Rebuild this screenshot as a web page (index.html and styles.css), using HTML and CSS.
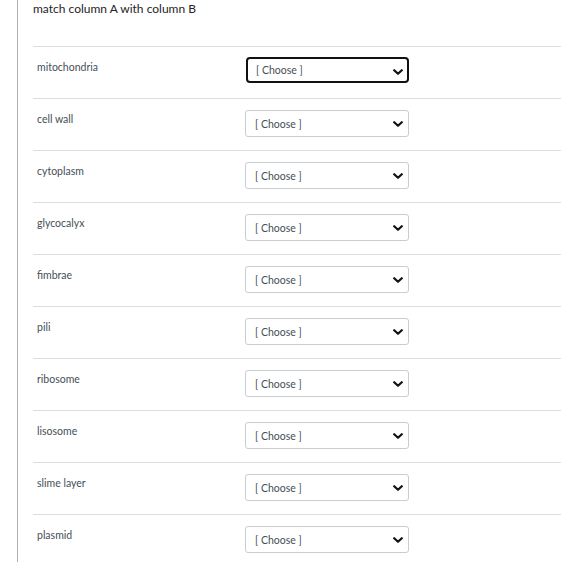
FILE: index.html
```html
<!DOCTYPE html>
<html>
<head>
<meta charset="utf-8">
<link rel="stylesheet" href="styles.css">
</head>
<body>
<div class="page">
  <div class="question">
    <div class="title">match column A with column B</div>
    <div class="rows">
      <div class="row"><div class="label">mitochondria</div><div class="sel focus"><select><option>[ Choose ]</option></select><svg class="chev" viewBox="0 0 10 6" width="10" height="6"><path d="M1.2 1.2 L5 4.8 L8.8 1.2" fill="none" stroke="#111" stroke-width="2.2" stroke-linecap="round" stroke-linejoin="round"/></svg></div></div>
      <div class="row"><div class="label">cell wall</div><div class="sel"><select><option>[ Choose ]</option></select><svg class="chev" viewBox="0 0 10 6" width="10" height="6"><path d="M1.2 1.2 L5 4.8 L8.8 1.2" fill="none" stroke="#111" stroke-width="2.2" stroke-linecap="round" stroke-linejoin="round"/></svg></div></div>
      <div class="row"><div class="label">cytoplasm</div><div class="sel"><select><option>[ Choose ]</option></select><svg class="chev" viewBox="0 0 10 6" width="10" height="6"><path d="M1.2 1.2 L5 4.8 L8.8 1.2" fill="none" stroke="#111" stroke-width="2.2" stroke-linecap="round" stroke-linejoin="round"/></svg></div></div>
      <div class="row"><div class="label">glycocalyx</div><div class="sel"><select><option>[ Choose ]</option></select><svg class="chev" viewBox="0 0 10 6" width="10" height="6"><path d="M1.2 1.2 L5 4.8 L8.8 1.2" fill="none" stroke="#111" stroke-width="2.2" stroke-linecap="round" stroke-linejoin="round"/></svg></div></div>
      <div class="row"><div class="label">fimbrae</div><div class="sel"><select><option>[ Choose ]</option></select><svg class="chev" viewBox="0 0 10 6" width="10" height="6"><path d="M1.2 1.2 L5 4.8 L8.8 1.2" fill="none" stroke="#111" stroke-width="2.2" stroke-linecap="round" stroke-linejoin="round"/></svg></div></div>
      <div class="row"><div class="label">pili</div><div class="sel"><select><option>[ Choose ]</option></select><svg class="chev" viewBox="0 0 10 6" width="10" height="6"><path d="M1.2 1.2 L5 4.8 L8.8 1.2" fill="none" stroke="#111" stroke-width="2.2" stroke-linecap="round" stroke-linejoin="round"/></svg></div></div>
      <div class="row"><div class="label">ribosome</div><div class="sel"><select><option>[ Choose ]</option></select><svg class="chev" viewBox="0 0 10 6" width="10" height="6"><path d="M1.2 1.2 L5 4.8 L8.8 1.2" fill="none" stroke="#111" stroke-width="2.2" stroke-linecap="round" stroke-linejoin="round"/></svg></div></div>
      <div class="row"><div class="label">lisosome</div><div class="sel"><select><option>[ Choose ]</option></select><svg class="chev" viewBox="0 0 10 6" width="10" height="6"><path d="M1.2 1.2 L5 4.8 L8.8 1.2" fill="none" stroke="#111" stroke-width="2.2" stroke-linecap="round" stroke-linejoin="round"/></svg></div></div>
      <div class="row"><div class="label">slime layer</div><div class="sel"><select><option>[ Choose ]</option></select><svg class="chev" viewBox="0 0 10 6" width="10" height="6"><path d="M1.2 1.2 L5 4.8 L8.8 1.2" fill="none" stroke="#111" stroke-width="2.2" stroke-linecap="round" stroke-linejoin="round"/></svg></div></div>
      <div class="row"><div class="label">plasmid</div><div class="sel"><select><option>[ Choose ]</option></select><svg class="chev" viewBox="0 0 10 6" width="10" height="6"><path d="M1.2 1.2 L5 4.8 L8.8 1.2" fill="none" stroke="#111" stroke-width="2.2" stroke-linecap="round" stroke-linejoin="round"/></svg></div></div>
    </div>
  </div>
</div>
</body>
</html>
```
FILE: styles.css
```css
html, body {
  margin: 0;
  padding: 0;
  background: #fff;
}
body {
  font-family: Lato, "Liberation Sans", sans-serif;
  color: #2d3b45;
  overflow: hidden;
}
.page {
  margin-left: 17px;
  border-left: 1px solid #a9afb3;
  min-height: 562px;
  padding-left: 15px;
}
.question {
  width: 528px;
}
.title {
  font-size: 12px;
  line-height: 16px;
  padding-top: 1px;
  height: 45px;
  color: #1f2326;
}
.row {
  display: flex;
  align-items: flex-start;
  border-top: 1px solid #dcdfe1;
  height: 51px;
  box-sizing: content-box;
}
.label {
  width: 208px;
  padding-left: 4px;
  padding-top: 12px;
  font-size: 10.5px;
  line-height: 16px;
  color: #454f56;
}
.sel {
  position: relative;
  margin-top: 11px;
  width: 164px;
  height: 27px;
}
.sel select {
  appearance: none;
  -webkit-appearance: none;
  width: 164px;
  height: 27px;
  box-sizing: border-box;
  border: 1px solid #c7cdd1;
  border-radius: 3px;
  background: #fff;
  font-family: Lato, "Liberation Sans", sans-serif;
  font-size: 10.5px;
  color: #454f56;
  padding: 0 0 0 9px;
  margin: 0;
  outline: none;
}
.sel.focus select {
  border: 2px solid #111;
  border-radius: 4px;
  padding-left: 8px;
  margin-top: -1px;
  margin-left: 1px;
  height: 26px;
  width: 163px;
}
.chev {
  position: absolute;
  right: 6px;
  top: 11px;
  pointer-events: none;
}
```
